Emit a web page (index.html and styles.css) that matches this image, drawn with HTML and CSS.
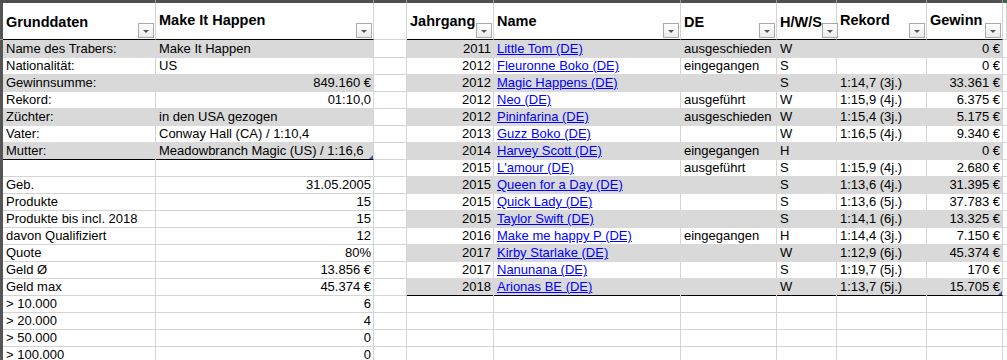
FILE: index.html
```html
<!DOCTYPE html>
<html lang="de">
<head>
<meta charset="utf-8">
<title>Make It Happen</title>
<link rel="stylesheet" href="styles.css">
</head>
<body>
<div class="sheet">
  <div class="row top">
    <div class="t"></div><div class="t"></div><div class="t"></div><div class="t"></div><div class="t"></div><div class="t"></div><div class="t"></div><div class="t"></div><div class="t"></div><div class="t"></div><div class="t tj"></div>
  </div>
  <div class="row head">
    <div class="rh"></div>
    <div class="c h hb"><span class="ht lo">Grunddaten</span><span class="fb"></span></div>
    <div class="c h hb"><span class="ht hi">Make It Happen</span><span class="fb"></span></div>
    <div class="c h"></div>
    <div class="c h hb"><span class="ht mid">Jahrgang</span><span class="fb"></span></div>
    <div class="c h hb"><span class="ht mid">Name</span><span class="fb"></span></div>
    <div class="c h hb"><span class="ht lo">DE</span><span class="fb"></span></div>
    <div class="c h hb"><span class="ht lo">H/W/S</span><span class="fb"></span></div>
    <div class="c h hb"><span class="ht hi">Rekord</span><span class="fb"></span></div>
    <div class="c h hb"><span class="ht hi">Gewinn</span><span class="fb"></span></div>
    <div class="c h"></div>
  </div>

  <div class="row">
    <div class="rh"></div>
    <div class="c g">Name des Trabers:</div><div class="c g end">Make It Happen</div><div class="c"></div>
    <div class="c g r">2011</div><div class="c g"><a href="#">Little Tom (DE)</a></div><div class="c g">ausgeschieden</div><div class="c g">W</div><div class="c g"></div><div class="c g end r">0 €</div><div class="c"></div>
  </div>
  <div class="row">
    <div class="rh"></div>
    <div class="c">Nationalität:</div><div class="c">US</div><div class="c"></div>
    <div class="c r">2012</div><div class="c"><a href="#">Fleuronne Boko (DE)</a></div><div class="c">eingegangen</div><div class="c">S</div><div class="c"></div><div class="c r">0 €</div><div class="c"></div>
  </div>
  <div class="row">
    <div class="rh"></div>
    <div class="c g">Gewinnsumme:</div><div class="c g end r">849.160 €</div><div class="c"></div>
    <div class="c g r">2012</div><div class="c g"><a href="#">Magic Happens (DE)</a></div><div class="c g"></div><div class="c g">S</div><div class="c g">1:14,7 (3j.)</div><div class="c g end r">33.361 €</div><div class="c"></div>
  </div>
  <div class="row">
    <div class="rh"></div>
    <div class="c">Rekord:</div><div class="c r">01:10,0</div><div class="c"></div>
    <div class="c r">2012</div><div class="c"><a href="#">Neo (DE)</a></div><div class="c">ausgeführt</div><div class="c">W</div><div class="c">1:15,9 (4j.)</div><div class="c r">6.375 €</div><div class="c"></div>
  </div>
  <div class="row">
    <div class="rh"></div>
    <div class="c g">Züchter:</div><div class="c g end">in den USA gezogen</div><div class="c"></div>
    <div class="c g r">2012</div><div class="c g"><a href="#">Pininfarina (DE)</a></div><div class="c g">ausgeschieden</div><div class="c g">W</div><div class="c g">1:15,4 (3j.)</div><div class="c g end r">5.175 €</div><div class="c"></div>
  </div>
  <div class="row">
    <div class="rh"></div>
    <div class="c">Vater:</div><div class="c">Conway Hall (CA) / 1:10,4</div><div class="c"></div>
    <div class="c r">2013</div><div class="c"><a href="#">Guzz Boko (DE)</a></div><div class="c"></div><div class="c">W</div><div class="c">1:16,5 (4j.)</div><div class="c r">9.340 €</div><div class="c"></div>
  </div>
  <div class="row">
    <div class="rh"></div>
    <div class="c g bb">Mutter:</div><div class="c g end bb corner">Meadowbranch Magic (US) / 1:16,6</div><div class="c"></div>
    <div class="c g r">2014</div><div class="c g"><a href="#">Harvey Scott (DE)</a></div><div class="c g">eingegangen</div><div class="c g">H</div><div class="c g"></div><div class="c g end r">0 €</div><div class="c"></div>
  </div>
  <div class="row">
    <div class="rh"></div>
    <div class="c"></div><div class="c"></div><div class="c"></div>
    <div class="c r">2015</div><div class="c"><a href="#">L'amour (DE)</a></div><div class="c">ausgeführt</div><div class="c">S</div><div class="c">1:15,9 (4j.)</div><div class="c r">2.680 €</div><div class="c"></div>
  </div>
  <div class="row">
    <div class="rh"></div>
    <div class="c">Geb.</div><div class="c r">31.05.2005</div><div class="c"></div>
    <div class="c g r">2015</div><div class="c g"><a href="#">Queen for a Day (DE)</a></div><div class="c g"></div><div class="c g">S</div><div class="c g">1:13,6 (4j.)</div><div class="c g end r">31.395 €</div><div class="c"></div>
  </div>
  <div class="row">
    <div class="rh"></div>
    <div class="c">Produkte</div><div class="c r">15</div><div class="c"></div>
    <div class="c r">2015</div><div class="c"><a href="#">Quick Lady (DE)</a></div><div class="c"></div><div class="c">S</div><div class="c">1:13,6 (5j.)</div><div class="c r">37.783 €</div><div class="c"></div>
  </div>
  <div class="row">
    <div class="rh"></div>
    <div class="c">Produkte bis incl. 2018</div><div class="c r">15</div><div class="c"></div>
    <div class="c g r">2015</div><div class="c g"><a href="#">Taylor Swift (DE)</a></div><div class="c g"></div><div class="c g">S</div><div class="c g">1:14,1 (6j.)</div><div class="c g end r">13.325 €</div><div class="c"></div>
  </div>
  <div class="row">
    <div class="rh"></div>
    <div class="c">davon Qualifiziert</div><div class="c r">12</div><div class="c"></div>
    <div class="c r">2016</div><div class="c"><a href="#">Make me happy P (DE)</a></div><div class="c">eingegangen</div><div class="c">H</div><div class="c">1:14,4 (3j.)</div><div class="c r">7.150 €</div><div class="c"></div>
  </div>
  <div class="row">
    <div class="rh"></div>
    <div class="c">Quote</div><div class="c r">80%</div><div class="c"></div>
    <div class="c g r">2017</div><div class="c g"><a href="#">Kirby Starlake (DE)</a></div><div class="c g"></div><div class="c g">W</div><div class="c g">1:12,9 (6j.)</div><div class="c g end r">45.374 €</div><div class="c"></div>
  </div>
  <div class="row">
    <div class="rh"></div>
    <div class="c">Geld Ø</div><div class="c r">13.856 €</div><div class="c"></div>
    <div class="c r">2017</div><div class="c"><a href="#">Nanunana (DE)</a></div><div class="c"></div><div class="c">S</div><div class="c">1:19,7 (5j.)</div><div class="c r">170 €</div><div class="c"></div>
  </div>
  <div class="row">
    <div class="rh"></div>
    <div class="c">Geld max</div><div class="c r">45.374 €</div><div class="c"></div>
    <div class="c g bb r">2018</div><div class="c g bb"><a href="#">Arionas BE (DE)</a></div><div class="c g bb"></div><div class="c g bb">W</div><div class="c g bb">1:13,7 (5j.)</div><div class="c g end bb r corner">15.705 €</div><div class="c"></div>
  </div>
  <div class="row">
    <div class="rh"></div>
    <div class="c">&gt; 10.000</div><div class="c r">6</div><div class="c"></div>
    <div class="c"></div><div class="c"></div><div class="c"></div><div class="c"></div><div class="c"></div><div class="c"></div><div class="c"></div>
  </div>
  <div class="row">
    <div class="rh"></div>
    <div class="c">&gt; 20.000</div><div class="c r">4</div><div class="c"></div>
    <div class="c"></div><div class="c"></div><div class="c"></div><div class="c"></div><div class="c"></div><div class="c"></div><div class="c"></div>
  </div>
  <div class="row">
    <div class="rh"></div>
    <div class="c">&gt; 50.000</div><div class="c r">0</div><div class="c"></div>
    <div class="c"></div><div class="c"></div><div class="c"></div><div class="c"></div><div class="c"></div><div class="c"></div><div class="c"></div>
  </div>
  <div class="row">
    <div class="rh"></div>
    <div class="c">&gt; 100.000</div><div class="c r">0</div><div class="c"></div>
    <div class="c"></div><div class="c"></div><div class="c"></div><div class="c"></div><div class="c"></div><div class="c"></div><div class="c"></div>
  </div>
</div>
</body>
</html>
```

FILE: styles.css
```css
* { box-sizing: border-box; }
html, body { margin: 0; padding: 0; background: #fff; }
body {
  font-family: "Liberation Sans", Arial, sans-serif;
  font-size: 13px;
  color: #000;
  overflow: hidden;
}
.sheet { width: 1007px; height: 360px; overflow: hidden; }
.row {
  display: grid;
  grid-template-columns: 3px 153px 218px 33px 87px 187px 96px 60px 90px 76px 1fr;
  height: 17px;
}
.row.top { height: 3px; }
.row.head { height: 37px; }
.t {
  background: #4f4f4f;
  border-right: 1px solid #9a9a9a;
}
.t:first-child { border-right: 0; }
.tj { border-right: 0; background: linear-gradient(90deg, #4f4f4f 0, #4f4f4f 2px, #217346 2px); }
.rh {
  background: #555;
  border-bottom: 1px solid #a0a0a0;
}
.c {
  border-right: 1px solid #d4d4d4;
  border-bottom: 1px solid #d4d4d4;
  padding: 1px 3px 0 3px;
  line-height: 16px;
  white-space: nowrap;
  overflow: visible;
}
.c.r { text-align: right; padding-right: 2px; }
.c.g {
  background: #d9d9d9;
  border-right-color: #d9d9d9;
  border-bottom-color: #d9d9d9;
}
.c.g.end { border-right-color: #d4d4d4; }
.c.bb { border-bottom-color: #000; }
.c a { color: #0000ff; text-decoration: underline; }

.c.h {
  display: flex;
  align-items: flex-start;
  padding: 0 0 0 3px;
  font-weight: bold;
  font-size: 14.5px;
  line-height: 17px;
}
.c.hb { border-bottom-color: #000; }
.ht { flex: 1 1 auto; }
.ht.lo { padding-top: 11px; }
.ht.mid { padding-top: 10px; }
.ht.hi { padding-top: 9px; }
.fb {
  flex: 0 0 auto;
  align-self: flex-end;
  width: 16px;
  height: 15px;
  margin: 0 1px 1px 0;
  border: 1px solid #a9a9a9;
  background: linear-gradient(#ffffff, #eaeaea);
  display: flex;
  align-items: center;
  justify-content: center;
}
.fb::before {
  content: "";
  width: 0;
  height: 0;
  border-left: 3px solid transparent;
  border-right: 3px solid transparent;
  border-top: 3px solid #555;
  margin-top: 1px;
}
.corner { position: relative; }
.corner::after {
  content: "";
  position: absolute;
  right: 0;
  bottom: 0;
  width: 0;
  height: 0;
  border-left: 4px solid transparent;
  border-bottom: 4px solid #3a5ba8;
}
```
